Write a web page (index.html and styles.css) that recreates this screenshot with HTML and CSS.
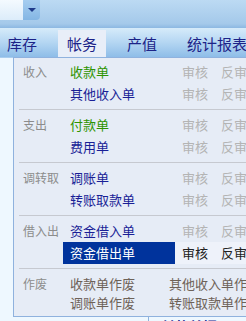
FILE: index.html
```html
<!DOCTYPE html>
<html lang="zh-CN">
<head>
    <meta charset="UTF-8">
    <title>帐务</title>
    <link rel="stylesheet" href="styles.css">
</head>
<body>

    <div class="topbar">
        <div class="combo">
            <div class="combo-input"></div>
            <div class="combo-btn"><span class="arrow"></span></div>
        </div>
    </div>

    <div class="tabs">
        <div class="tab">库存</div>
        <div class="tab active">帐务</div>
        <div class="tab">产值</div>
        <div class="tab">统计报表</div>
    </div>

    <div class="content">
        <div class="behind">
            <span class="behind-cell"></span>
            <span class="behind-text">付款单据</span>
        </div>

        <!-- dropdown for the 帐务 tab -->
        <div class="menu">
            <div class="group first">
                <div class="label">收入</div>
                <div class="item green">收款单</div>
                <div class="act">审核</div>
                <div class="act">反审</div>
                <div class="label"></div>
                <div class="item">其他收入单</div>
                <div class="act">审核</div>
                <div class="act">反审</div>
            </div>
            <div class="group">
                <div class="label">支出</div>
                <div class="item green">付款单</div>
                <div class="act">审核</div>
                <div class="act">反审</div>
                <div class="label"></div>
                <div class="item">费用单</div>
                <div class="act">审核</div>
                <div class="act">反审</div>
            </div>
            <div class="group">
                <div class="label">调转取</div>
                <div class="item">调账单</div>
                <div class="act">审核</div>
                <div class="act">反审</div>
                <div class="label"></div>
                <div class="item">转账取款单</div>
                <div class="act">审核</div>
                <div class="act">反审</div>
            </div>
            <div class="group">
                <div class="label">借入出</div>
                <div class="item">资金借入单</div>
                <div class="act">审核</div>
                <div class="act">反审</div>
                <div class="label"></div>
                <div class="item selected">资金借出单</div>
                <div class="act on">审核</div>
                <div class="act on">反审</div>
            </div>
            <div class="group void">
                <div class="label">作废</div>
                <div class="vitem">收款单作废</div>
                <div class="vitem">其他收入单作废</div>
                <div class="label"></div>
                <div class="vitem">调账单作废</div>
                <div class="vitem">转账取款单作废</div>
            </div>
        </div>
    </div>

</body>
</html>
```

FILE: styles.css
```css
* {
    box-sizing: border-box;
}

body {
    margin: 0;
    width: 246px;
    height: 321px;
    overflow: hidden;
    font-family: "Noto Sans CJK SC", "Microsoft YaHei", sans-serif;
    background-color: #eef8ff;
}

.topbar {
    height: 28px;
    background: linear-gradient(#bcdaf3, #a4c9ea 85%, #8cb8e2);
}

.combo {
    display: flex;
    height: 20px;
}

.combo-input {
    width: 23px;
    background: linear-gradient(#f4faff, #dcecfa);
}

.combo-btn {
    width: 17px;
    display: flex;
    align-items: center;
    justify-content: center;
    background: linear-gradient(#a6cdf0, #84b6e4);
    border-bottom-right-radius: 4px;
}

.arrow {
    width: 0;
    height: 0;
    border-left: 4px solid transparent;
    border-right: 4px solid transparent;
    border-top: 4px solid #1e3a8a;
}

.tabs {
    display: flex;
    gap: 12px;
    height: 29px;
    padding-top: 2px;
    overflow: hidden;
    background: linear-gradient(#d6ebfa, #b4d6f2 50%, #8ebde8);
}

.tab {
    flex-shrink: 0;
    padding: 0 9px;
    font-size: 15px;
    line-height: 27px;
    white-space: nowrap;
    color: #1c2388;
}

.tab:first-child {
    margin-left: -2px;
}

.tab.active {
    background-color: #e8eef8;
}

.content {
    position: relative;
    height: 264px;
    border-top: 1px solid #a9cdee;
}

.behind {
    position: absolute;
    left: 148px;
    top: 255px;
    display: flex;
    align-items: flex-end;
    height: 14px;
}

.behind-cell {
    width: 1px;
    height: 14px;
    background-color: #8fb2de;
}

.behind-text {
    margin-left: 12px;
    font-size: 14px;
    font-weight: bold;
    color: #1c2a8e;
    line-height: 14px;
    transform: translateY(6px);
}

.menu {
    position: absolute;
    left: 13px;
    top: -1px;
    width: 260px;
    background-color: #e6ecf6;
    border: 1px solid #8fb2de;
}

.group {
    display: grid;
    grid-template-columns: 44px 112px 39px 1fr;
    grid-auto-rows: 22px;
    padding: 4px 0;
    margin-left: 5px;
    border-top: 1px solid #c6c9d0;
}

.group > div {
    font-size: 13px;
    line-height: 22px;
    white-space: nowrap;
}

.group.first {
    border-top: none;
    padding-top: 3px;
}

.group > .label {
    padding-left: 4px;
    font-size: 12px;
    color: #8c8c8c;
}

.item {
    padding-left: 7px;
    color: #1a1f96;
}

.item.green {
    color: #2e9400;
}

.item.selected {
    background-color: #00339c;
    color: #ffffff;
}

.act {
    padding-left: 7px;
    color: #b4b4b4;
}

.act.on {
    color: #222222;
    background-color: #eef2fa;
}

.group.void {
    grid-template-columns: 44px 99px 1fr;
    grid-auto-rows: 19px;
    padding: 5px 0 4px;
}

.group.void > div {
    line-height: 19px;
}

.vitem {
    padding-left: 7px;
    color: #6e6258;
}
```
